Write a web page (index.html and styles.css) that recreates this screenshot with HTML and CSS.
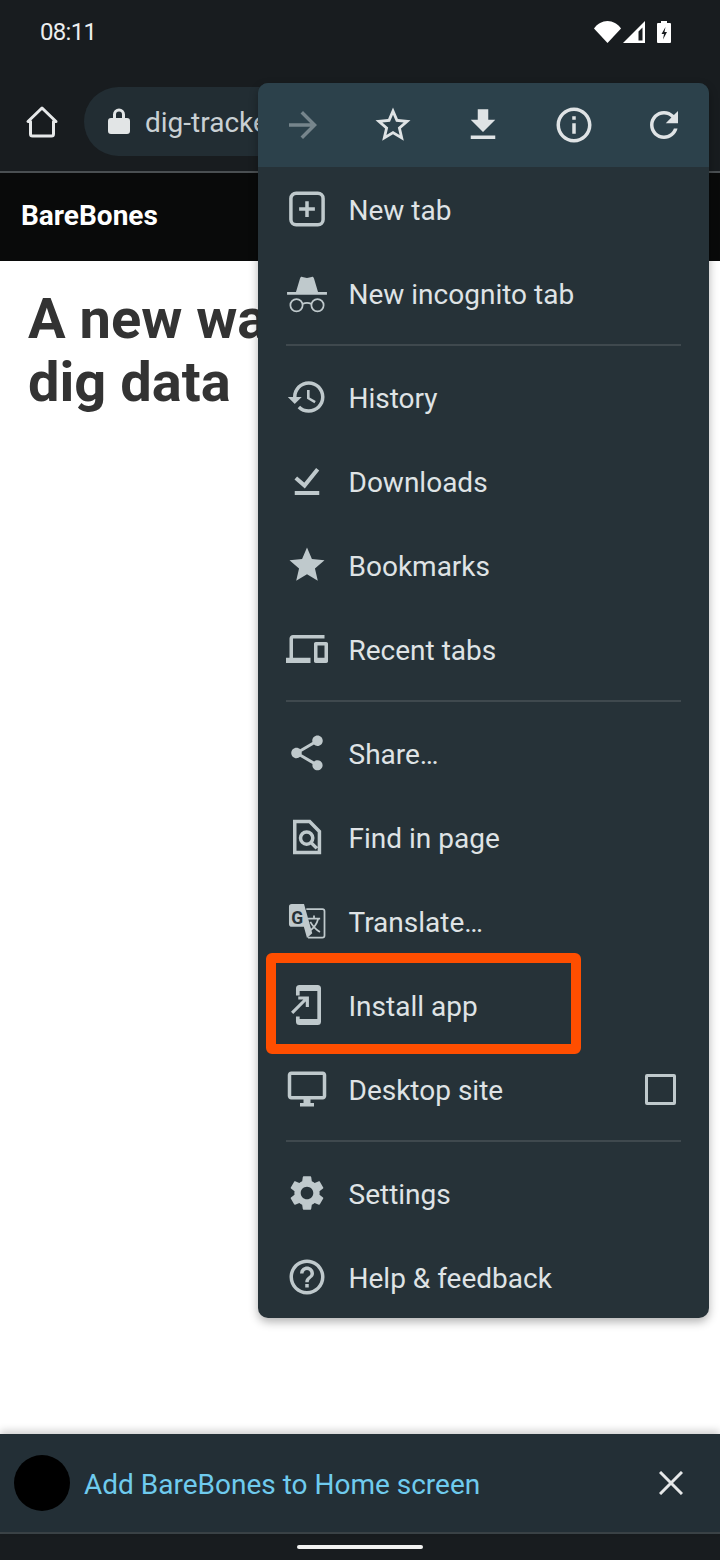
FILE: index.html
```html
<!DOCTYPE html>
<html lang="en">
<head>
    <meta charset="UTF-8">
    <meta name="viewport" content="width=device-width, initial-scale=1.0">
    <title>BareBones - Install app</title>
    <link rel="stylesheet" href="styles.css">
</head>
<body>
    <div class="status-bar">
        <span class="clock">08:11</span>
        <div class="status-icons">
            <svg class="wifi" viewBox="0 0 27 22"><path d="M0 7.500C3.500 2.800 8.200 0 13.500 0S23.500 2.800 27 7.500L13.500 22z"/></svg>
            <svg class="signal" viewBox="0 0 22 22"><path fill-rule="evenodd" d="M22 0v22H0zM19.500 6.500l-4 4V19.500h4z"/></svg>
            <svg class="battery" viewBox="0 0 14 22"><path fill-rule="evenodd" d="M4 0h6v2h3a1 1 0 0 1 1 1v18a1 1 0 0 1-1 1H1a1 1 0 0 1-1-1V3a1 1 0 0 1 1-1h3zM8.500 6L4.500 13h2.500l-1 5.500 4-7.500H7.500z"/></svg>
        </div>
    </div>

    <div class="toolbar">
        <svg class="home-icon" viewBox="0 0 34 34"><path d="M17 3L3 16.500h2.500V29a2 2 0 0 0 2 2h19a2 2 0 0 0 2-2V16.500H31z"/></svg>
        <div class="url-pill">
            <svg class="lock-icon" viewBox="0 0 22 26"><path d="M5 10V6.500a6 6 0 0 1 12 0V10h2a3 3 0 0 1 3 3v10a3 3 0 0 1-3 3H3a3 3 0 0 1-3-3V13a3 3 0 0 1 3-3zm3 0h6V6.500a3 3 0 0 0-6 0z"/></svg>
            <span class="url-text">dig-tracker.example</span>
        </div>
    </div>

    <div class="site-nav">BareBones</div>

    <div class="page">
        <h1>A new way to<br>dig data</h1>
    </div>

    <div class="install-banner">
        <div class="banner-logo"></div>
        <span class="banner-text">Add BareBones to Home screen</span>
        <svg class="banner-close" viewBox="0 0 24 24"><path d="M1 1l22 22M23 1L1 23"/></svg>
    </div>
    <div class="nav-bar"><div class="nav-handle"></div></div>

    <div class="menu">
        <div class="menu-top">
            <svg class="top-icon dim" viewBox="0 0 24 24"><path d="M12 4l-1.410 1.410L16.170 11H4v2h12.170l-5.580 5.590L12 20l8-8z"/></svg>
            <svg class="top-icon" viewBox="0 0 24 24"><path d="M22 9.240l-7.190-.62L12 2 9.190 8.630 2 9.240l5.460 4.730L5.820 21 12 17.270 18.180 21l-1.630-7.030L22 9.240zM12 15.400l-3.760 2.270 1-4.280-3.320-2.880 4.380-.38L12 6.100l1.710 4.040 4.380.38-3.320 2.880 1 4.280L12 15.400z"/></svg>
            <svg class="top-icon" viewBox="0 0 24 24"><path d="M19 9h-4V3H9v6H5l7 7 7-7zM5 18v2h14v-2H5z"/></svg>
            <svg class="top-icon" viewBox="0 0 24 24"><path d="M11 7h2v2h-2zm0 4h2v6h-2zm1-9C6.480 2 2 6.480 2 12s4.480 10 10 10 10-4.480 10-10S17.520 2 12 2zm0 18c-4.410 0-8-3.590-8-8s3.590-8 8-8 8 3.590 8 8-3.590 8-8 8z"/></svg>
            <svg class="top-icon" viewBox="0 0 24 24"><path d="M17.650 6.350C16.200 4.900 14.210 4 12 4c-4.420 0-7.990 3.580-7.990 8s3.570 8 7.990 8c3.730 0 6.840-2.550 7.730-6h-2.080c-.82 2.330-3.040 4-5.650 4-3.310 0-6-2.690-6-6s2.690-6 6-6c1.660 0 3.140.69 4.220 1.780L13 11h7V4l-2.350 2.350z"/></svg>
        </div>

        <div class="menu-item">
            <svg class="item-icon" viewBox="0 0 24 24"><path class="line" d="M5.800 3h12.400a3 3 0 0 1 3 3v12a3 3 0 0 1-3 3H5.800a3 3 0 0 1-3-3V6a3 3 0 0 1 3-3zM12 7.500v9M7.500 12h9"/></svg>
            <span>New tab</span>
        </div>
        <div class="menu-item">
            <svg class="item-icon" viewBox="0 0 24 24"><path d="M5.700 11.400L8 3.700c.2-.7.700-1 1.300-.9l2.700.6 2.700-.6c.6-.1 1.100.2 1.300.9l2.300 7.700z"/><path d="M.6 11.400h22.800v1.600H.6z"/><path class="line thin" d="M2.500 19a3.500 3.500 0 1 0 7 0a3.500 3.500 0 1 0-7 0zM14.500 19a3.500 3.500 0 1 0 7 0a3.500 3.500 0 1 0-7 0zM9.500 18.300c1.600-.9 3.400-.9 5 0"/></svg>
            <span>New incognito tab</span>
        </div>
        <div class="menu-divider"></div>

        <div class="menu-item">
            <svg class="item-icon" viewBox="0 0 24 24"><path d="M13 3c-4.970 0-9 4.030-9 9H1l3.890 3.890.07.14L9 12H6c0-3.870 3.130-7 7-7s7 3.130 7 7-3.130 7-7 7c-1.930 0-3.680-.79-4.940-2.060l-1.420 1.420C8.270 19.990 10.510 21 13 21c4.970 0 9-4.030 9-9s-4.030-9-9-9zm-1 5v5l4.280 2.540.72-1.210-3.500-2.080V8H12z"/></svg>
            <span>History</span>
        </div>
        <div class="menu-item">
            <svg class="item-icon" viewBox="0 0 24 24"><path class="line check" d="M5.600 10.300l5 4.300 7.500-9.300M5 18.900h14"/></svg>
            <span>Downloads</span>
        </div>
        <div class="menu-item">
            <svg class="item-icon" viewBox="0 0 24 24"><path d="M12 17.270L18.180 21l-1.640-7.030L22 9.240l-7.190-.61L12 2 9.190 8.630 2 9.240l5.460 4.730L5.820 21z"/></svg>
            <span>Bookmarks</span>
        </div>
        <div class="menu-item">
            <svg class="item-icon" viewBox="0 0 24 24"><path d="M4 6h18V4H4c-1.100 0-2 .9-2 2v11H0v3h14v-3H4V6zm19 2h-6c-.55 0-1 .45-1 1v10c0 .55.45 1 1 1h6c.55 0 1-.45 1-1V9c0-.55-.45-1-1-1zm-1 9h-4v-7h4v7z"/></svg>
            <span>Recent tabs</span>
        </div>
        <div class="menu-divider"></div>

        <div class="menu-item">
            <svg class="item-icon" viewBox="0 0 24 24"><path d="M18 16.080c-.76 0-1.440.3-1.960.77L8.910 12.700c.05-.23.09-.46.09-.7s-.04-.47-.09-.7l7.050-4.110c.54.5 1.250.81 2.040.81 1.660 0 3-1.340 3-3s-1.340-3-3-3-3 1.340-3 3c0 .24.04.47.09.7L8.040 9.810C7.500 9.310 6.790 9 6 9c-1.660 0-3 1.340-3 3s1.340 3 3 3c.79 0 1.500-.31 2.040-.81l7.120 4.160c-.05.21-.08.43-.08.65 0 1.610 1.310 2.920 2.920 2.920s2.920-1.310 2.920-2.920-1.310-2.920-2.920-2.920z"/></svg>
            <span>Share…</span>
        </div>
        <div class="menu-item">
            <svg class="item-icon" viewBox="0 0 24 24"><path class="line" d="M5 3.200h8.500l5.600 5.600v12H5zM14.600 15.500l3 3M8.300 12.600a3.500 3.500 0 1 0 7 0a3.500 3.500 0 1 0-7 0z"/></svg>
            <span>Find in page</span>
        </div>
        <div class="menu-item">
            <svg class="item-icon" viewBox="0 0 24 24">
                <path d="M3.300 2.300h7L15 19l-3 2.700-1.800-6.400H3.300a1.600 1.600 0 0 1-1.600-1.600V3.900a1.600 1.600 0 0 1 1.600-1.600z"/>
                <path class="line thin" d="M11.600 5.200h9.200a1.200 1.200 0 0 1 1.200 1.200v13.900a1.200 1.200 0 0 1-1.200 1.200h-8.200"/>
                <path class="line thin" d="M12.500 10.700h7M16 8.800v1.900M18.400 10.700c-.8 3-2.600 5.500-5 7M13.900 12.500c1.300 2.400 3 4.300 5.500 5.800"/>
                <text class="translate-g" x="3" y="13.700">G</text>
            </svg>
            <span>Translate…</span>
        </div>
        <div class="menu-item">
            <svg class="item-icon" viewBox="0 0 24 24"><path d="M7.700.6H18a2 2 0 0 1 2 2v18.800a2 2 0 0 1-2 2H7.700a2 2 0 0 1-2-2v-2.900h2.100V20h10.100V4H7.800v2.500H5.700V2.600a2 2 0 0 1 2-2z"/><path class="line arrow" d="M3.500 16.500L12 8M7 8h5.200v5.200"/></svg>
            <span>Install app</span>
            <div class="highlight"></div>
        </div>
        <div class="menu-item">
            <svg class="item-icon" viewBox="0 0 24 24"><path d="M21 2H3c-1.100 0-2 .9-2 2v12c0 1.100.9 2 2 2h7v2H8v2h8v-2h-2v-2h7c1.100 0 2-.9 2-2V4c0-1.100-.9-2-2-2zm0 14H3V4h18v12z"/></svg>
            <span>Desktop site</span>
            <div class="checkbox"></div>
        </div>
        <div class="menu-divider"></div>

        <div class="menu-item">
            <svg class="item-icon" viewBox="0 0 24 24"><path d="M19.140 12.940c.04-.3.06-.61.06-.94 0-.32-.02-.64-.07-.94l2.030-1.580c.18-.14.23-.41.12-.61l-1.920-3.320c-.12-.22-.37-.29-.59-.22l-2.390.96c-.5-.38-1.030-.7-1.620-.94l-.36-2.540c-.04-.24-.24-.41-.48-.41h-3.840c-.24 0-.43.17-.47.41l-.36 2.540c-.59.24-1.130.57-1.620.94l-2.390-.96c-.22-.08-.47 0-.59.22L2.740 8.870c-.12.21-.08.47.12.61l2.030 1.580c-.05.3-.09.63-.09.94s.02.64.07.94l-2.030 1.580c-.18.14-.23.41-.12.61l1.920 3.320c.12.22.37.29.59.22l2.390-.96c.5.38 1.030.7 1.620.94l.36 2.540c.05.24.24.41.48.41h3.840c.24 0 .44-.17.47-.41l.36-2.540c.59-.24 1.130-.56 1.620-.94l2.390.96c.22.08.47 0 .59-.22l1.920-3.320c.12-.22.07-.47-.12-.61l-2.010-1.580zM12 15.600c-1.980 0-3.600-1.620-3.600-3.600s1.620-3.600 3.600-3.600 3.600 1.620 3.600 3.600-1.620 3.600-3.600 3.600z"/></svg>
            <span>Settings</span>
        </div>
        <div class="menu-item">
            <svg class="item-icon" viewBox="0 0 24 24"><path d="M11 18h2v-2h-2v2zm1-16C6.480 2 2 6.480 2 12s4.480 10 10 10 10-4.480 10-10S17.520 2 12 2zm0 18c-4.410 0-8-3.590-8-8s3.590-8 8-8 8 3.590 8 8-3.590 8-8 8zm0-14c-2.210 0-4 1.790-4 4h2c0-1.100.9-2 2-2s2 .9 2 2c0 2-3 1.750-3 5h2c0-2.250 3-2.500 3-5 0-2.210-1.790-4-4-4z"/></svg>
            <span>Help &amp; feedback</span>
        </div>
    </div>
</body>
</html>
```

FILE: styles.css
```css
html, body {
    margin: 0;
    padding: 0;
}
body {
    position: relative;
    width: 720px;
    height: 1560px;
    overflow: hidden;
    display: flex;
    flex-direction: column;
    font-family: Roboto, sans-serif;
    background: #fff;
}
.status-bar {
    height: 64px;
    flex: none;
    display: flex;
    justify-content: space-between;
    align-items: center;
    padding: 0 49px 0 40px;
    background: #181c1f;
    color: #eceeef;
    box-sizing: border-box;
}
.clock {
    font-size: 24px;
    letter-spacing: -0.7px;
}
.status-icons {
    display: flex;
    align-items: center;
}
.status-icons svg {
    display: block;
    height: 22px;
    fill: #fff;
}
.wifi { width: 27px; margin-right: 2px; }
.signal { width: 22px; margin-right: 12px; }
.battery { width: 14px; }
.toolbar {
    height: 109px;
    flex: none;
    box-sizing: border-box;
    display: flex;
    align-items: center;
    padding: 8px 0 0 25px;
    background: #181c1f;
    border-bottom: 2px solid #4a4f52;
}
.home-icon {
    width: 34px;
    height: 34px;
    fill: none;
    stroke: #e6e8e9;
    stroke-width: 3;
    stroke-linejoin: round;
}
.url-pill {
    width: 600px;
    height: 69px;
    margin-left: 25px;
    padding-left: 24px;
    box-sizing: border-box;
    display: flex;
    align-items: center;
    background: #222d33;
    border-radius: 35px;
    color: #c9d0d3;
    font-size: 28px;
    white-space: nowrap;
}
.lock-icon {
    width: 22px;
    height: 26px;
    fill: #e2e5e6;
    margin-right: 15px;
    margin-top: -2px;
}
.url-text {
    margin-top: 2px;
}
.site-nav {
    height: 88px;
    flex: none;
    box-sizing: border-box;
    padding: 0 0 3px 21px;
    display: flex;
    align-items: center;
    background: #090a0a;
    color: #fff;
    font-size: 28px;
    font-weight: 700;
}
.page {
    flex: 1;
    padding: 27px 28px 0;
    background: #fff;
}
.page h1 {
    margin: 0;
    font-size: 56px;
    line-height: 63px;
    font-weight: 700;
    color: #333;
    white-space: nowrap;
}
.install-banner {
    height: 98px;
    flex: none;
    display: flex;
    align-items: center;
    padding: 0 37px 0 14px;
    background: #232f36;
    box-shadow: 0 -3px 8px rgba(0,0,0,0.2);
    position: relative;
}
.banner-logo {
    width: 56px;
    height: 56px;
    border-radius: 50%;
    background: #000;
}
.banner-text {
    margin: 2px 0 0 14px;
    flex: 1;
    font-size: 28px;
    color: #6fcbee;
}
.banner-close {
    width: 24px;
    height: 24px;
    fill: none;
    stroke: #e6e8e9;
    stroke-width: 3;
}
.nav-bar {
    height: 28px;
    flex: none;
    box-sizing: border-box;
    border-top: 2px solid #3c4448;
    background: #181c1f;
    display: flex;
    justify-content: center;
    padding-top: 11px;
}
.nav-handle {
    width: 126px;
    height: 4px;
    border-radius: 2px;
    background: #f2f2f2;
}

/* overflow menu sits over the page */
.menu {
    position: absolute;
    left: 258px;
    top: 83px;
    width: 451px;
    height: 1235px;
    background: #263238;
    border-radius: 10px;
    box-shadow: 0 4px 10px rgba(0,0,0,0.3);
}
.menu-top {
    height: 84px;
    display: flex;
    justify-content: space-around;
    align-items: center;
    background: #2c414b;
    border-radius: 10px 10px 0 0;
}
.top-icon {
    width: 42px;
    height: 42px;
    fill: #dfe3e5;
}
.top-icon.dim {
    fill: #76858c;
}
.menu-item {
    position: relative;
    height: 84px;
    display: flex;
    align-items: center;
    padding: 0 33px 0 28px;
    color: #dfe3e5;
    font-size: 28px;
}
.menu-item span {
    margin-top: 2px;
}
.item-icon {
    width: 42px;
    height: 42px;
    flex: none;
    margin-right: 20.500px;
    fill: #bfc9cc;
}
.line {
    fill: none;
    stroke: #bfc9cc;
    stroke-width: 2;
}
.line.thin {
    stroke-width: 1;
}
.line.check {
    stroke-width: 2.300;
}
.line.arrow {
    stroke-width: 1.800;
}
.translate-g {
    font-family: Roboto, sans-serif;
    font-size: 10px;
    font-weight: 700;
    fill: #263238;
}
.menu-divider {
    height: 2px;
    margin: 9px 28px;
    background: #3f494e;
}
.checkbox {
    width: 31px;
    height: 31px;
    box-sizing: border-box;
    margin-left: auto;
    border: 3px solid #bfc9cc;
    border-radius: 2px;
}
.highlight {
    position: absolute;
    left: 8px;
    top: -10px;
    width: 315px;
    height: 101px;
    box-sizing: border-box;
    border: 10px solid #ff4e00;
    border-radius: 6px;
}
```
